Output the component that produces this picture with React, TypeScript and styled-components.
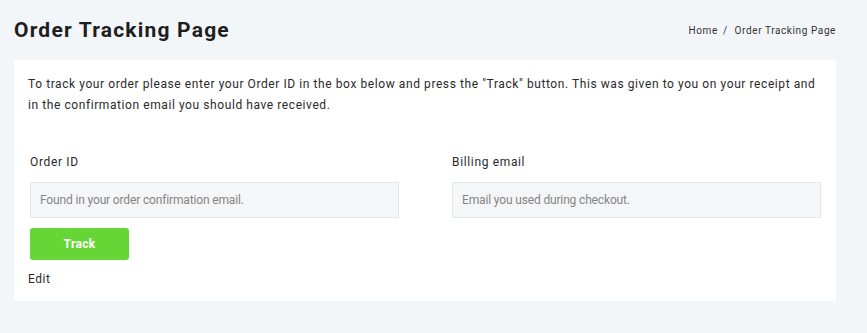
import styled, { createGlobalStyle } from 'styled-components'

const GlobalStyle = createGlobalStyle`
  html, body {
    margin: 0;
    padding: 0;
    background: #f3f6f9;
    font-family: Roboto, "Liberation Sans", sans-serif;
    color: #222;
  }
  * {
    box-sizing: border-box;
  }
`

export default function App() {
  return (
    <>
      <GlobalStyle />
      <Page>
        <TopBar>
          <Title>Order Tracking Page</Title>
          <Crumbs>
            <Crumb>Home</Crumb>
            <Sep>/</Sep>
            <Crumb>Order Tracking Page</Crumb>
          </Crumbs>
        </TopBar>
        <Card>
          <Intro>
            To track your order please enter your Order ID in the box below and
            press the "Track" button. This was given to you on your receipt and
            in the confirmation email you should have received.
          </Intro>
          <Form>
            <Fields>
              <Field>
                <Label>Order ID</Label>
                <Input placeholder="Found in your order confirmation email." />
              </Field>
              <Field>
                <Label>Billing email</Label>
                <Input placeholder="Email you used during checkout." />
              </Field>
            </Fields>
            <TrackButton type="button">Track</TrackButton>
          </Form>
          <EditLink>Edit</EditLink>
        </Card>
      </Page>
    </>
  )
}

const Page = styled.div`
  padding: 0 31px 33px 14px;
`

const TopBar = styled.header`
  display: flex;
  align-items: center;
  justify-content: space-between;
  height: 60px;
`

const Title = styled.h1`
  margin: 0;
  font-size: 21px;
  font-weight: 700;
  letter-spacing: 1.2px;
  color: #1e1e1e;
`

const Crumbs = styled.nav`
  display: flex;
  align-items: center;
  gap: 5px;
  font-size: 10px;
  letter-spacing: 0.6px;
  color: #333;
`

const Crumb = styled.span``

const Sep = styled.span`
  margin-right: 2px;
`

const Card = styled.section`
  background: #fff;
  padding: 14px 14px 15px;
`

const Intro = styled.p`
  margin: 0;
  font-size: 12px;
  line-height: 21px;
  letter-spacing: 0.58px;
  color: #2a2a2a;
`

const Form = styled.form`
  margin-top: 39px;
  padding: 0 1px 0 2px;
`

const Fields = styled.div`
  display: grid;
  grid-template-columns: 1fr 1fr;
  column-gap: 53px;
`

const Field = styled.div`
  display: flex;
  flex-direction: column;
`

const Label = styled.label`
  font-size: 12px;
  letter-spacing: 0.65px;
  line-height: 14px;
  color: #2a2a2a;
  margin-bottom: 13px;
`

const Input = styled.input`
  height: 36px;
  padding: 0 9px;
  border: 1px solid #e6e6e6;
  background: #f5f6f8;
  font-family: Roboto, "Liberation Sans", sans-serif;
  font-size: 12px;
  letter-spacing: -0.15px;
  color: #333;
  outline: none;

  &::placeholder {
    color: #858585;
  }
`

const TrackButton = styled.button`
  display: block;
  margin-top: 10px;
  width: 99px;
  height: 32px;
  border: none;
  border-radius: 3px;
  background: #66d636;
  color: #fff;
  font-family: Roboto, "Liberation Sans", sans-serif;
  font-size: 12px;
  font-weight: 700;
  letter-spacing: 0.3px;
`

const EditLink = styled.div`
  margin-top: 12px;
  font-size: 12px;
  letter-spacing: 0.5px;
  color: #2a2a2a;
`
